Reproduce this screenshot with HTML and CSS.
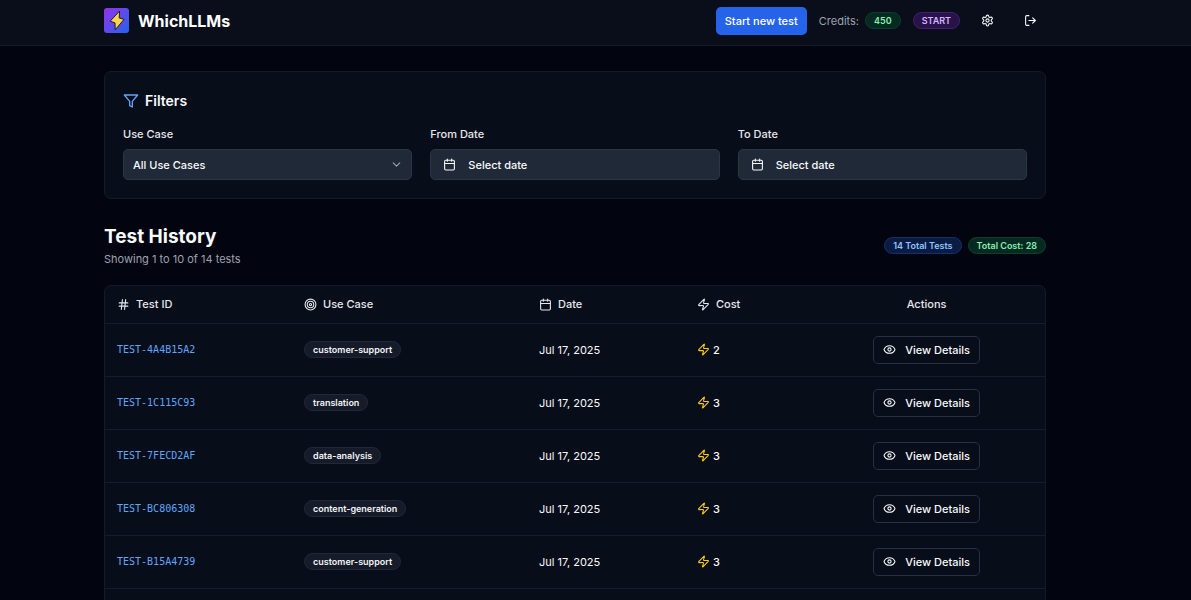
FILE: index.html
```html
<!DOCTYPE html>
<html lang="en">
  <head>
    <meta charset="UTF-8" />
    <meta name="viewport" content="width=device-width, initial-scale=1.0" />
    <title>WhichLLMs</title>
    <link rel="stylesheet" href="styles.css">
  </head>
  <body>
    <!-- shared icons -->
    <svg class="sprite" aria-hidden="true">
      <symbol id="bolt" viewBox="0 0 24 24">
        <path d="M4 14a1 1 0 0 1-.78-1.63l9.9-10.2a.5.5 0 0 1 .86.46l-1.92 6.02A1 1 0 0 0 13 10h7a1 1 0 0 1 .78 1.63l-9.9 10.2a.5.5 0 0 1-.86-.46l1.92-6.02A1 1 0 0 0 11 14z" />
      </symbol>
      <symbol id="calendar" viewBox="0 0 24 24">
        <path d="M8 2v4M16 2v4M3 10h18" />
        <rect x="3" y="4" width="18" height="18" rx="2" />
      </symbol>
      <symbol id="eye" viewBox="0 0 24 24">
        <path d="M2.06 12.35a1 1 0 0 1 0-.7 10.75 10.75 0 0 1 19.88 0 1 1 0 0 1 0 .7 10.75 10.75 0 0 1-19.88 0" />
        <circle cx="12" cy="12" r="3" />
      </symbol>
    </svg>

    <header class="topbar">
      <div class="container topbar-inner">
        <a class="brand" href="#">
          <svg class="logo" viewBox="0 0 25 25" aria-hidden="true">
            <defs>
              <linearGradient id="logo-bg" x1="0" y1="0" x2="1" y2="1">
                <stop offset="0" stop-color="#9333ea" />
                <stop offset="1" stop-color="#2563eb" />
              </linearGradient>
            </defs>
            <rect width="25" height="25" rx="3" fill="url(#logo-bg)" />
            <path d="M15.6 3 6.2 13.2l4.8 1.7.2 6.9L20 11.4l-4.8-1.5z" fill="#fcd34d" stroke="#1f1a2e" stroke-width="1" stroke-linejoin="round" />
          </svg>
          WhichLLMs
        </a>
        <nav class="actions">
          <button class="btn-primary">Start new test</button>
          <div class="credits">Credits: <span class="badge green">450</span></div>
          <span class="badge purple">START</span>
          <button class="icon-btn" aria-label="Settings">
            <svg class="icon" viewBox="0 0 24 24">
              <path d="M12.22 2h-.44a2 2 0 0 0-2 2v.18a2 2 0 0 1-1 1.73l-.43.25a2 2 0 0 1-2 0l-.15-.08a2 2 0 0 0-2.73.73l-.22.38a2 2 0 0 0 .73 2.73l.15.1a2 2 0 0 1 1 1.72v.51a2 2 0 0 1-1 1.74l-.15.09a2 2 0 0 0-.73 2.73l.22.38a2 2 0 0 0 2.73.73l.15-.08a2 2 0 0 1 2 0l.43.25a2 2 0 0 1 1 1.73V20a2 2 0 0 0 2 2h.44a2 2 0 0 0 2-2v-.18a2 2 0 0 1 1-1.73l.43-.25a2 2 0 0 1 2 0l.15.08a2 2 0 0 0 2.73-.73l.22-.39a2 2 0 0 0-.73-2.73l-.15-.08a2 2 0 0 1-1-1.74v-.5a2 2 0 0 1 1-1.74l.15-.09a2 2 0 0 0 .73-2.73l-.22-.38a2 2 0 0 0-2.73-.73l-.15.08a2 2 0 0 1-2 0l-.43-.25a2 2 0 0 1-1-1.73V4a2 2 0 0 0-2-2z" />
              <circle cx="12" cy="12" r="3" />
            </svg>
          </button>
          <button class="icon-btn" aria-label="Log out">
            <svg class="icon" viewBox="0 0 24 24">
              <path d="M9 21H5a2 2 0 0 1-2-2V5a2 2 0 0 1 2-2h4M16 17l5-5-5-5M21 12H9" />
            </svg>
          </button>
        </nav>
      </div>
    </header>

    <main>
      <div class="container">
        <section class="card filters">
          <h2 class="filters-title">
            <svg class="icon funnel" viewBox="0 0 24 24"><path d="M22 3H2l8 9.46V19l4 2v-8.54z" /></svg>
            Filters
          </h2>
          <div class="fields">
            <div class="field">
              <label for="use-case">Use Case</label>
              <div class="select-wrap">
                <select class="control" id="use-case">
                  <option>All Use Cases</option>
                  <option>customer-support</option>
                  <option>translation</option>
                  <option>data-analysis</option>
                  <option>content-generation</option>
                </select>
                <svg class="icon chevron" viewBox="0 0 24 24"><path d="m6 9 6 6 6-6" /></svg>
              </div>
            </div>
            <div class="field">
              <label for="from-date">From Date</label>
              <button class="control" id="from-date"><svg class="icon"><use href="#calendar" /></svg>Select date</button>
            </div>
            <div class="field">
              <label for="to-date">To Date</label>
              <button class="control" id="to-date"><svg class="icon"><use href="#calendar" /></svg>Select date</button>
            </div>
          </div>
        </section>

        <section class="history-head">
          <div>
            <h1>Test History</h1>
            <p>Showing 1 to 10 of 14 tests</p>
          </div>
          <div class="totals">
            <span class="badge blue">14 Total Tests</span>
            <span class="badge green">Total Cost: 28</span>
          </div>
        </section>

        <div class="card">
          <table>
            <thead>
              <tr>
                <th class="col-id"><span class="cell"><svg class="icon" viewBox="0 0 24 24"><path d="M4 9h16M4 15h16M10 3 8 21M16 3l-2 18" /></svg>Test ID</span></th>
                <th class="col-case"><span class="cell"><svg class="icon" viewBox="0 0 24 24"><circle cx="12" cy="12" r="10" /><circle cx="12" cy="12" r="6" /><circle cx="12" cy="12" r="2" /></svg>Use Case</span></th>
                <th class="col-date"><span class="cell"><svg class="icon"><use href="#calendar" /></svg>Date</span></th>
                <th class="col-cost"><span class="cell"><svg class="icon"><use href="#bolt" /></svg>Cost</span></th>
                <th class="col-actions">Actions</th>
              </tr>
            </thead>
            <tbody>
              <tr>
                <td class="test-id">TEST-4A4B15A2</td>
                <td><span class="badge gray">customer-support</span></td>
                <td>Jul 17, 2025</td>
                <td><span class="cost"><svg class="icon"><use href="#bolt" /></svg>2</span></td>
                <td class="col-actions"><button class="btn-outline"><svg class="icon"><use href="#eye" /></svg>View Details</button></td>
              </tr>
              <tr>
                <td class="test-id">TEST-1C115C93</td>
                <td><span class="badge gray">translation</span></td>
                <td>Jul 17, 2025</td>
                <td><span class="cost"><svg class="icon"><use href="#bolt" /></svg>3</span></td>
                <td class="col-actions"><button class="btn-outline"><svg class="icon"><use href="#eye" /></svg>View Details</button></td>
              </tr>
              <tr>
                <td class="test-id">TEST-7FECD2AF</td>
                <td><span class="badge gray">data-analysis</span></td>
                <td>Jul 17, 2025</td>
                <td><span class="cost"><svg class="icon"><use href="#bolt" /></svg>3</span></td>
                <td class="col-actions"><button class="btn-outline"><svg class="icon"><use href="#eye" /></svg>View Details</button></td>
              </tr>
              <tr>
                <td class="test-id">TEST-BC806308</td>
                <td><span class="badge gray">content-generation</span></td>
                <td>Jul 17, 2025</td>
                <td><span class="cost"><svg class="icon"><use href="#bolt" /></svg>3</span></td>
                <td class="col-actions"><button class="btn-outline"><svg class="icon"><use href="#eye" /></svg>View Details</button></td>
              </tr>
              <tr>
                <td class="test-id">TEST-B15A4739</td>
                <td><span class="badge gray">customer-support</span></td>
                <td>Jul 17, 2025</td>
                <td><span class="cost"><svg class="icon"><use href="#bolt" /></svg>3</span></td>
                <td class="col-actions"><button class="btn-outline"><svg class="icon"><use href="#eye" /></svg>View Details</button></td>
              </tr>
              <tr>
                <td colspan="5"></td>
              </tr>
            </tbody>
          </table>
        </div>
      </div>
    </main>
  </body>
</html>
```

FILE: styles.css
```css
* {
  box-sizing: border-box;
}
body {
  display: flex;
  flex-direction: column;
  height: 100vh;
  margin: 0;
  overflow: hidden;
  background: #02040f;
  color: #f9fafb;
  font-family: Inter, "Liberation Sans", sans-serif;
  font-size: 11px;
  line-height: 16px;
}
h1,
h2,
p {
  margin: 0;
}
button,
select {
  font: inherit;
  color: inherit;
  cursor: pointer;
}
.sprite {
  display: none;
}
.container {
  max-width: 942px;
  margin: 0 auto;
}
.icon {
  width: 13px;
  height: 13px;
  flex: none;
  fill: none;
  stroke: currentColor;
  stroke-width: 2;
  stroke-linecap: round;
  stroke-linejoin: round;
}

/* top bar */
.topbar {
  flex: none;
  padding-right: 41px;
  background: #090e1a;
  border-bottom: 1px solid #141a27;
}
.topbar-inner {
  display: flex;
  justify-content: space-between;
  align-items: center;
  padding: 5px 0 9px;
}
.brand {
  display: flex;
  align-items: center;
  gap: 9px;
  color: white;
  font-size: 16px;
  font-weight: 700;
  text-decoration: none;
}
.logo {
  width: 25px;
  height: 25px;
}
.actions {
  display: flex;
  align-items: center;
  gap: 12px;
}
.btn-primary {
  padding: 6px 9px;
  border: none;
  border-radius: 5px;
  background: #2563eb;
  color: white;
  font-weight: 500;
}
.credits {
  display: flex;
  align-items: center;
  gap: 6px;
  color: #9ca3af;
}
.icon-btn {
  display: flex;
  padding: 9px;
  border: none;
  background: none;
}

/* badges */
.badge {
  display: inline-block;
  padding: 0 8px;
  border: 1px solid;
  border-radius: 9px;
  font-size: 9px;
  font-weight: 600;
  line-height: 15px;
  vertical-align: middle;
}
.green {
  background: #062a22;
  border-color: #0d4028;
  color: #86efac;
}
.purple {
  background: #27124a;
  border-color: #43216e;
  color: #d8b4fe;
}
.blue {
  background: #0a1c44;
  border-color: #15306b;
  color: #93c5fd;
}
.gray {
  background: #151b29;
  border-color: #212836;
  color: #f3f4f6;
}

/* filters */
main {
  flex: 1;
  min-height: 0;
  padding: 25px 41px 0 0;
}
.card {
  border: 1px solid #141b28;
  border-radius: 7px;
  background: #080d1a;
}
.filters {
  padding: 18px;
}
.filters-title {
  display: flex;
  align-items: center;
  gap: 6px;
  font-size: 14px;
  font-weight: 600;
  line-height: 22px;
}
.funnel {
  width: 16px;
  height: 16px;
  color: #60a5fa;
}
.fields {
  display: grid;
  grid-template-columns: repeat(3, 1fr);
  gap: 18px;
  margin-top: 14px;
}
.field label {
  display: block;
  margin-bottom: 7px;
  color: #e5e7eb;
  font-weight: 500;
}
.control {
  display: flex;
  align-items: center;
  gap: 12px;
  width: 100%;
  height: 31px;
  padding: 0 12px;
  border: 1px solid #2c3644;
  border-radius: 5px;
  background: #1f2937;
  font-weight: 500;
}
.select-wrap {
  position: relative;
}
.select-wrap .control {
  appearance: none;
  padding: 0 9px;
}
.chevron {
  position: absolute;
  top: 9px;
  right: 9px;
  color: #9ca3af;
  pointer-events: none;
}

/* test history */
.history-head {
  display: flex;
  justify-content: space-between;
  align-items: center;
  margin: 24px 0 18px;
}
.history-head h1 {
  font-size: 19px;
  font-weight: 700;
  line-height: 28px;
}
.history-head p {
  color: #9ca3af;
}
.totals {
  display: flex;
  gap: 6px;
}
table {
  width: 100%;
  border-collapse: collapse;
  table-layout: fixed;
}
th,
td {
  padding: 0 12px;
  text-align: left;
}
th {
  height: 37px;
  color: #e5e7eb;
  font-weight: 500;
}
td {
  height: 53px;
  border-top: 1px solid #161d2a;
}
.cell {
  display: flex;
  align-items: center;
  gap: 6px;
}
.col-id {
  width: 19.9%;
}
.col-case {
  width: 25%;
}
.col-date {
  width: 16.8%;
}
.col-cost {
  width: 13.1%;
}
th.col-actions,
td.col-actions {
  text-align: center;
}
.test-id {
  color: #60a5fa;
  font-family: "DejaVu Sans Mono", monospace;
  font-size: 10px;
}
.cost {
  display: flex;
  align-items: center;
  gap: 3px;
  font-weight: 500;
}
.cost .icon {
  color: #facc15;
}
.btn-outline {
  display: inline-flex;
  align-items: center;
  gap: 9px;
  height: 28px;
  padding: 0 9px;
  border: 1px solid #29313e;
  border-radius: 5px;
  background: none;
  font-weight: 500;
  vertical-align: middle;
}
```
